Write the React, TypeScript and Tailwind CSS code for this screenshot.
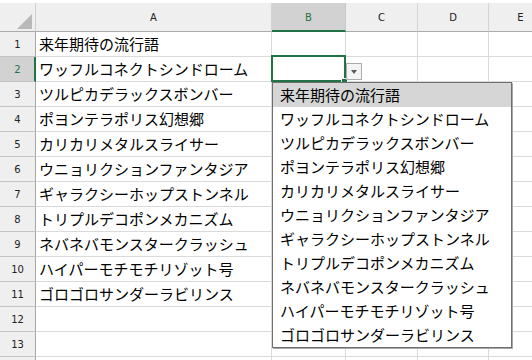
import React from "react";

const items = [
  "来年期待の流行語",
  "ワッフルコネクトシンドローム",
  "ツルピカデラックスボンバー",
  "ポヨンテラポリス幻想郷",
  "カリカリメタルスライサー",
  "ウニョリクションファンタジア",
  "ギャラクシーホップストンネル",
  "トリプルデコポンメカニズム",
  "ネバネバモンスタークラッシュ",
  "ハイパーモチモチリゾット号",
  "ゴロゴロサンダーラビリンス",
];

const jp = "font-['Noto_Sans_CJK_JP','Noto_Sans',sans-serif]";
const hdrFont = "font-['DejaVu_Sans',sans-serif]";

function Row({ n }: { n: number }) {
  const active = n === 2;
  const text = n >= 1 && n <= 11 ? items[n - 1] : "";
  const label = n <= 13 ? String(n) : "";
  return (
    <div className="flex h-[25px]">
      <div
        className={`w-[36px] shrink-0 flex items-center justify-center border-b border-b-[#c4c4c4] text-[10px] ${hdrFont} ${
          active
            ? "bg-[#d2d2d2] text-[#217346] border-r-2 border-r-[#217346] pl-[1px]"
            : "bg-[#efefef] text-[#222222] border-r border-r-[#a8a8a8]"
        }`}
      >
        {label}
      </div>
      <div
        className={`w-[236px] shrink-0 border-r border-b border-[#dadada] pl-[3px] flex items-center text-[15px] text-black whitespace-nowrap ${jp}`}
      >
        {text}
      </div>
      <div className="w-[74px] shrink-0 border-r border-b border-[#dadada]" />
      <div className="w-[72px] shrink-0 border-r border-b border-[#dadada]" />
      <div className="w-[71px] shrink-0 border-r border-b border-[#dadada]" />
      <div className="flex-1 border-b border-[#dadada]" />
    </div>
  );
}

export default function App() {
  const rows = Array.from({ length: 14 }, (_, i) => i + 1);
  return (
    <div className="relative w-[532px] h-[360px] overflow-hidden bg-white">
      {/* column header */}
      <div className="pt-[3px] bg-white">
        <div className={`flex h-[29px] text-[10px] ${hdrFont} text-[#222222]`}>
          <div className="relative w-[36px] shrink-0 bg-[#efefef] border-r border-r-[#cfcfcf] border-b border-b-[#ababab]">
            <svg
              className="absolute right-[3px] bottom-[2px]"
              width="15"
              height="15"
              viewBox="0 0 15 15"
            >
              <polygon points="15,0 15,15 0,15" fill="#b9b9b9" />
            </svg>
          </div>
          <div className="w-[236px] shrink-0 bg-[#efefef] border-r border-r-[#d4d4d4] border-b border-b-[#ababab] flex items-center justify-center">
            A
          </div>
          <div className="w-[74px] shrink-0 bg-[#d2d2d2] border-r border-r-[#c8c8c8] border-b-2 border-b-[#217346] flex items-center justify-center text-[#217346] pt-[1px]">
            B
          </div>
          <div className="w-[72px] shrink-0 bg-[#efefef] border-r border-r-[#d4d4d4] border-b border-b-[#ababab] flex items-center justify-center">
            C
          </div>
          <div className="w-[71px] shrink-0 bg-[#efefef] border-r border-r-[#d4d4d4] border-b border-b-[#ababab] flex items-center justify-center">
            D
          </div>
          <div className="flex-1 bg-[#efefef] border-b border-b-[#ababab] flex items-center justify-center pl-[20px]">
            E
          </div>
        </div>
      </div>

      {rows.map((n) => (
        <Row key={n} n={n} />
      ))}

      {/* active cell */}
      <div className="absolute left-[271px] top-[55px] w-[75px] h-[27px] border-2 border-[#217346]" />
      <div className="absolute left-[341px] top-[78px] w-[7px] h-[6px] bg-[#217346] border border-white" />

      {/* dropdown button */}
      <div className="absolute left-[346px] top-[63px] w-[16px] h-[17px] border border-[#ababab] bg-[#f4f4f4] flex items-center justify-center">
        <div className="w-0 h-0 border-l-[3.5px] border-r-[3.5px] border-t-[4px] border-l-transparent border-r-transparent border-t-[#5a5a5a]" />
      </div>

      {/* dropdown list */}
      <div
        className={`absolute left-[272px] top-[82px] w-[240px] border border-[#6e6e6e] bg-white shadow-[1px_1px_0_#a8a8a8] ${jp}`}
      >
        {items.map((t, i) => (
          <div
            key={t}
            className={`h-[24px] pl-[7px] flex items-center text-[15px] text-black whitespace-nowrap ${
              i === 0 ? "bg-[#d6d6d6]" : ""
            }`}
          >
            {t}
          </div>
        ))}
      </div>
    </div>
  );
}
